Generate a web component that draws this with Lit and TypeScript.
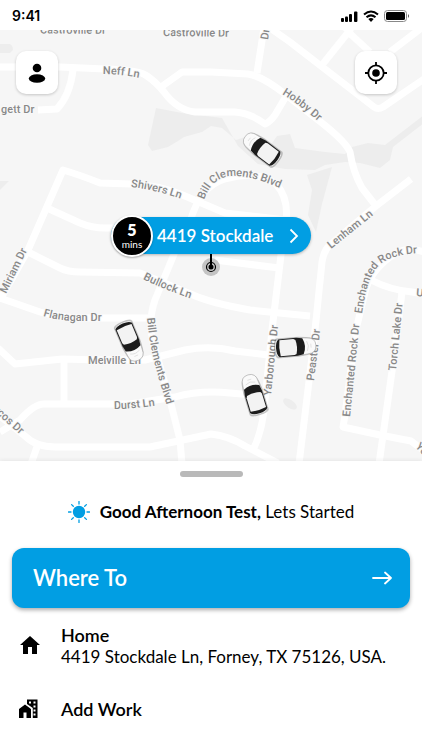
import { LitElement, html, svg, css } from "lit";
import { customElement } from "lit/decorators.js";

const ROADS = [
  "M0 67H60L105 69Q140 70 147 76Q156 82 164 92Q177 110 195 112H235Q250 113 265 124Q270 122 275 115L285 98",
  "M161 87L182 72H211L248 74Q262 76 285 94L322 123Q346 142 350 152Q353 172 362 188L376 206L411 179",
  "M73 70Q70 95 57 109L38 110",
  "M264 28L257 73",
  "M270 28L290 42L374 107Q378 110 383 107L424 79",
  "M322 65L350 30L338 24M346 30L370 52",
  "M390 52L424 26",
  "M376 206L330 245Q324 250 322 262L314 340L299 464",
  "M0 300L28 250L63 170Q80 175 100 183L131 184Q160 185 185 196L225 213L286 220",
  "M190 222Q200 186 225 179Q258 170 276 184Q289 198 286 222L281 255L272 330L265 400Q263 430 253 450",
  "M47 208L80 223Q92 228 105 228H140",
  "M28 252L60 268Q68 272 80 272L140 273L193 295Q211 303 250 310L310 316",
  "M0 298L40 312Q60 318 90 318H153",
  "M182 235L155 300Q148 320 153 342L172 408L180 440L182 464",
  "M215 260L279 268",
  "M-2 348L15 364L62 359L100 360H145L185 350Q210 345 235 351L268 355",
  "M64 360V403",
  "M0 432L20 420Q34 404 44 404H130L175 397Q200 390 230 393L265 396",
  "M-5 412L25 436Q36 447 55 447H150L211 434Q229 436 245 446L278 463",
  "M38 444L31 464",
  "M424 252Q405 245 390 257Q370 272 365 292L356 330L345 415L343 427L380 435L411 441L424 451",
  "M371 280Q390 290 412 292L424 294",
  "M402 292L395 350L379 464",
];

const WATER = [
  "M0 44H10Q13 46 13 50L10 53H0Z",
  "M156 108L148 145L152 151L168 147L178 141L184 137L202 132L211 126L222 128L236 140L248 136L270 146L277 136L290 134L295 148L325 152L345 154L352 147L368 143L385 145L424 115V123L393 147L390 160L380 168L360 163L345 162L325 165L315 170L285 169L258 164L238 146L222 118L182 113Z",
  "M332 167L307 175L312 190L308 215L316 232L322 204Z",
  "M0 181H9L0 190Z",
];

const LABELS = [
  { d: "M40 33.5L140 34", text: "Castroville Dr" },
  { d: "M163 36L260 37", text: "Castroville Dr" },
  { d: "M268 40L271 20", text: "Dr" },
  { d: "M103 74Q124 74 155 81", text: "Neff Ln" },
  { d: "M1 113H60", text: "gett Dr" },
  { d: "M282 94Q305 108 334 136", text: "Hobby Dr" },
  { d: "M131 187Q160 190 200 206", text: "Shivers Ln" },
  { d: "M204 200Q212 177 232 176Q254 175 290 193", text: "Bill Clements Blvd" },
  { d: "M331 249L392 200", text: "Lenham Ln" },
  { d: "M6 294L36 232", text: "Miriam Dr" },
  { d: "M143 279Q166 291 210 305", text: "Bullock Ln" },
  { d: "M43 316Q60 321 78 321H130", text: "Flanagan Dr" },
  { d: "M147 318L149 336Q153 365 178 440", text: "Bill Clements Blvd" },
  { d: "M88 364H170", text: "Melville Ln" },
  { d: "M114 409Q140 409 175 402", text: "Durst Ln" },
  { d: "M-18 401L32 445", text: "Marcos Dr" },
  { d: "M271 396L281 296", text: "Yarborough Dr" },
  { d: "M314 381L324 300", text: "Peaster Dr" },
  { d: "M350 417L363 290", text: "Enchanted Rock Dr" },
  { d: "M362 314Q366 284 374 272Q384 254 422 253", text: "Enchanted Rock Dr" },
  { d: "M396 371L407 260", text: "Torch Lake Dr" },
  { d: "M416 296L440 298", text: "Un" },
  { d: "M415 447L440 472", text: "York" },
];

const CARS = [
  { x: 262, y: 149, turn: -53 },
  { x: 130, y: 341, turn: 157 },
  { x: 295, y: 347, turn: 85 },
  { x: 254, y: 395, turn: -17 },
];

@customElement("street-map")
class StreetMap extends LitElement {
  static styles = css`
    :host { display: block; }
    .map { display: block; width: 100%; height: 100%; background: #f6f6f6; }
    .water { fill: #ededed; }
    .road { fill: none; stroke: #fff; stroke-width: 7; stroke-linejoin: round; }
    .label {
      font: 500 11px Roboto, "Liberation Sans", sans-serif;
      fill: #888;
      stroke: #f8f8f8;
      stroke-width: 2;
      paint-order: stroke;
    }
    .shade { fill: #0003; }
    .body { fill: #fafafa; stroke: #aaa; stroke-width: 0.6; }
    .glass { fill: #1c1c1c; }
    .roof { fill: #f3f3f3; }
    .hood { fill: none; stroke: #ddd; stroke-width: 0.8; }
  `;

  render() {
    return html`<svg class="map" viewBox="0 30 422 431" preserveAspectRatio="xMidYMid slice" role="img" aria-label="Street map">
      ${WATER.map((d) => svg`<path class="water" d=${d} />`)}
      <ellipse class="water" cx="290" cy="404" rx="8" ry="4" transform="rotate(35 290 404)" />
      ${ROADS.map((d) => svg`<path class="road" d=${d} />`)}
      ${LABELS.map(
        (l, i) => svg`<path id=${"street" + i} d=${l.d} fill="none" />
          <text class="label"><textPath href=${"#street" + i}>${l.text}</textPath></text>`
      )}
      ${CARS.map(
        (c) => svg`<g transform=${`translate(${c.x} ${c.y}) rotate(${c.turn})`}>
          <path class="shade" d="M-9-12Q-8-21 0-21Q8-21 9-12L10-4V18Q9 21 0 21Q-9 21-10 18V-4Z" />
          <path class="body" d="M-8-12Q-8-21 0-21Q8-21 8-12L9-4V17Q8 20 0 20Q-8 20-9 17V-4Z" />
          <path class="glass" d="M-8-8Q0-12 8-8L9-2V16Q7 19 0 19Q-7 19-9 16V-2Z" />
          <path class="roof" d="M-7-1Q0-3 7-1L8 1V15Q0 16.500-8 15V1Z" />
          <path class="hood" d="M-5-12Q0-15 5-12M-2-16H2" />
        </g>`
      )}
    </svg>`;
  }
}

@customElement("app-root")
class AppRoot extends LitElement {
  static styles = css`
    :host {
      display: flex;
      flex-direction: column;
      min-height: 100vh;
      background: #fff;
      color: #000;
      font-family: Lato, "Open Sans", sans-serif;
    }
    * { box-sizing: border-box; }
    svg { display: block; }
    button { border: 0; padding: 0; font: inherit; color: inherit; cursor: pointer; }
    .status {
      display: flex;
      align-items: center;
      justify-content: space-between;
      height: 30px;
      padding: 2px 12px 0;
      font: 600 14px/20px Inter, sans-serif;
    }
    .area { position: relative; display: flex; flex: 1; min-height: 431px; }
    .canvas { position: absolute; inset: 0; }
    .tools {
      position: absolute;
      top: 21px;
      left: 16px;
      right: 25px;
      display: flex;
      justify-content: space-between;
    }
    .tool {
      display: grid;
      place-items: center;
      width: 42px;
      height: 43px;
      border-radius: 10px;
      background: #fff;
      box-shadow: 0 1px 3px #0003;
    }
    .marker {
      position: relative;
      display: flex;
      flex-direction: column;
      align-items: center;
      margin: auto;
      padding-top: 4px;
    }
    .place {
      display: flex;
      align-items: center;
      gap: 4px;
      height: 37px;
      padding-right: 12px;
      border-radius: 20px;
      background: #019ee3;
      color: #fff;
      font-size: 17px;
      line-height: 20px;
      font-weight: 600;
      box-shadow: 0 1px 3px #0004;
    }
    .street { width: 128px; white-space: nowrap; text-align: left; }
    .eta {
      display: flex;
      flex-direction: column;
      align-items: center;
      justify-content: center;
      width: 42px;
      height: 42px;
      border: 2px solid #fff;
      border-radius: 50%;
      background: #000;
      font-size: 10px;
      line-height: 12px;
      font-weight: 400;
      box-shadow: 0 1px 2px #0004;
    }
    .eta strong { font-size: 16px; line-height: 16px; font-weight: 800; }
    .sheet {
      position: relative;
      display: flex;
      flex-direction: column;
      padding: 10px 12px 29px;
      background: #fff;
      box-shadow: 0 -1px 4px #0001;
    }
    .grip { width: 63px; height: 6px; border-radius: 3px; background: #b9b9b9; align-self: center; }
    .greeting {
      display: flex;
      align-items: center;
      justify-content: center;
      gap: 10px;
      margin: 23px 0 24px;
      font-size: 17px;
      line-height: 24px;
      font-weight: 400;
    }
    .greeting strong { font-weight: 700; }
    .where {
      display: flex;
      align-items: center;
      justify-content: space-between;
      height: 60px;
      padding: 0 18px 0 21px;
      border-radius: 12px;
      background: #019ee3;
      color: #fff;
      font-size: 22px;
      line-height: 28px;
      font-weight: 600;
      box-shadow: 0 2px 4px #0005;
    }
    .spots { display: flex; flex-direction: column; gap: 30px; margin: 15px 0 0; padding: 0 6px; list-style: none; }
    .spot {
      display: flex;
      align-items: center;
      gap: 19px;
      width: 100%;
      background: none;
      text-align: left;
      font-size: 17px;
      line-height: 24px;
      font-weight: 400;
    }
    .name { display: block; font-size: 18px; font-weight: 600; }
    .address { display: block; line-height: 20px; }
  `;

  render() {
    return html`
      <header class="status">
        <span>9:41</span>
        <svg width="70" height="14" viewBox="0 0 70 14" aria-hidden="true">
          <rect x="1" y="9" width="3" height="4" rx="1" />
          <rect x="5" y="7.500" width="3" height="5.500" rx="1" />
          <rect x="9" y="5" width="3" height="8" rx="1" />
          <rect x="14" y="2.500" width="3.400" height="10.500" rx="1" />
          <g fill="none" stroke="#000" stroke-width="2">
            <path d="M24 5.500Q31-0.500 38 5.500M26.500 8.300Q31 4.500 35.500 8.300" />
          </g>
          <path d="M28.300 10Q31 8 33.700 10L31 13Z" />
          <rect x="44.500" y="1.500" width="22" height="11" rx="3" fill="none" stroke="#888" />
          <rect x="46" y="3" width="19" height="8" rx="1.500" />
          <path d="M68 5Q70 7 68 9Z" fill="#555" />
        </svg>
      </header>
      <main class="area">
        <street-map class="canvas"></street-map>
        <div class="tools">
          <button class="tool" aria-label="Profile">
            <svg width="24" height="24" viewBox="0 0 24 24">
              <circle cx="12" cy="7" r="4.300" />
              <ellipse cx="12" cy="17.500" rx="8.200" ry="4.300" />
            </svg>
          </button>
          <button class="tool" aria-label="My location">
            <svg width="24" height="24" viewBox="0 0 24 24">
              <circle cx="12" cy="12" r="3.800" />
              <circle cx="12" cy="12" r="7.700" fill="none" stroke="#000" stroke-width="1.800" />
              <path d="M12 1V4.500M12 19.500V23M1 12H4.500M19.500 12H23" stroke="#000" stroke-width="1.800" />
            </svg>
          </button>
        </div>
        <div class="marker">
          <button class="place">
            <span class="eta"><strong>5</strong>mins</span>
            <span class="street">4419 Stockdale</span>
            <svg width="10" height="16" viewBox="0 0 10 16" fill="none" stroke="#fff" stroke-width="1.800">
              <path d="M1.500 1.500L8 8L1.500 14.500" />
            </svg>
          </button>
          <svg width="20" height="24" viewBox="0 0 20 24" aria-hidden="true">
            <circle cx="10" cy="13" r="9" fill="#c4c4c4" />
            <circle cx="10" cy="13" r="4.500" fill="none" stroke="#000" stroke-width="1.200" />
            <circle cx="10" cy="13" r="2.500" />
            <path d="M10 0V13" stroke="#000" stroke-width="2" />
          </svg>
        </div>
      </main>
      <section class="sheet">
        <div class="grip"></div>
        <div class="greeting">
          <svg width="22" height="22" viewBox="0 0 22 22" aria-hidden="true">
            <circle cx="11" cy="11" r="6.200" fill="#019ee3" />
            <path
              d="M11 0.500V3M11 19V21.500M0.500 11H3M19 11H21.500M3.600 3.600L5.300 5.300M16.700 16.700L18.400 18.400M3.600 18.400L5.300 16.700M16.700 5.300L18.400 3.600"
              stroke="#019ee3" stroke-width="1.300" stroke-linecap="round"
            />
          </svg>
          <span><strong>Good Afternoon Test,</strong> Lets Started</span>
        </div>
        <button class="where">
          Where To
          <svg width="20" height="14" viewBox="0 0 20 14" fill="none" stroke="#fff" stroke-width="1.800" stroke-linecap="round" stroke-linejoin="round">
            <path d="M1 7H19M13 1.500L19 7L13 12.500" />
          </svg>
        </button>
        <ul class="spots">
          <li>
            <button class="spot">
              <svg width="24" height="24" viewBox="0 0 24 24"><path d="M12 3L22 12H19V21H14V14H10V21H5V12H2Z" /></svg>
              <span><span class="name">Home</span><span class="address">4419 Stockdale Ln, Forney, TX 75126, USA.</span></span>
            </button>
          </li>
          <li>
            <button class="spot">
              <svg width="24" height="24" viewBox="0 0 24 24">
                <path d="M1 12V21H5.500V15.500H8.500V21H13V12L7 7.500Z" />
                <path fill-rule="evenodd" d="M9 2.500V7L14.800 11V21H19.500V2.500ZM11 4.500H13V6.500H11ZM15.500 4.500H17.500V6.500H15.500ZM15.500 8.500H17.500V10.500H15.500ZM15.500 12.500H17.500V14.500H15.500ZM15.500 16.500H17.500V18.500H15.500Z" />
              </svg>
              <span class="name">Add Work</span>
            </button>
          </li>
        </ul>
      </section>
    `;
  }
}
